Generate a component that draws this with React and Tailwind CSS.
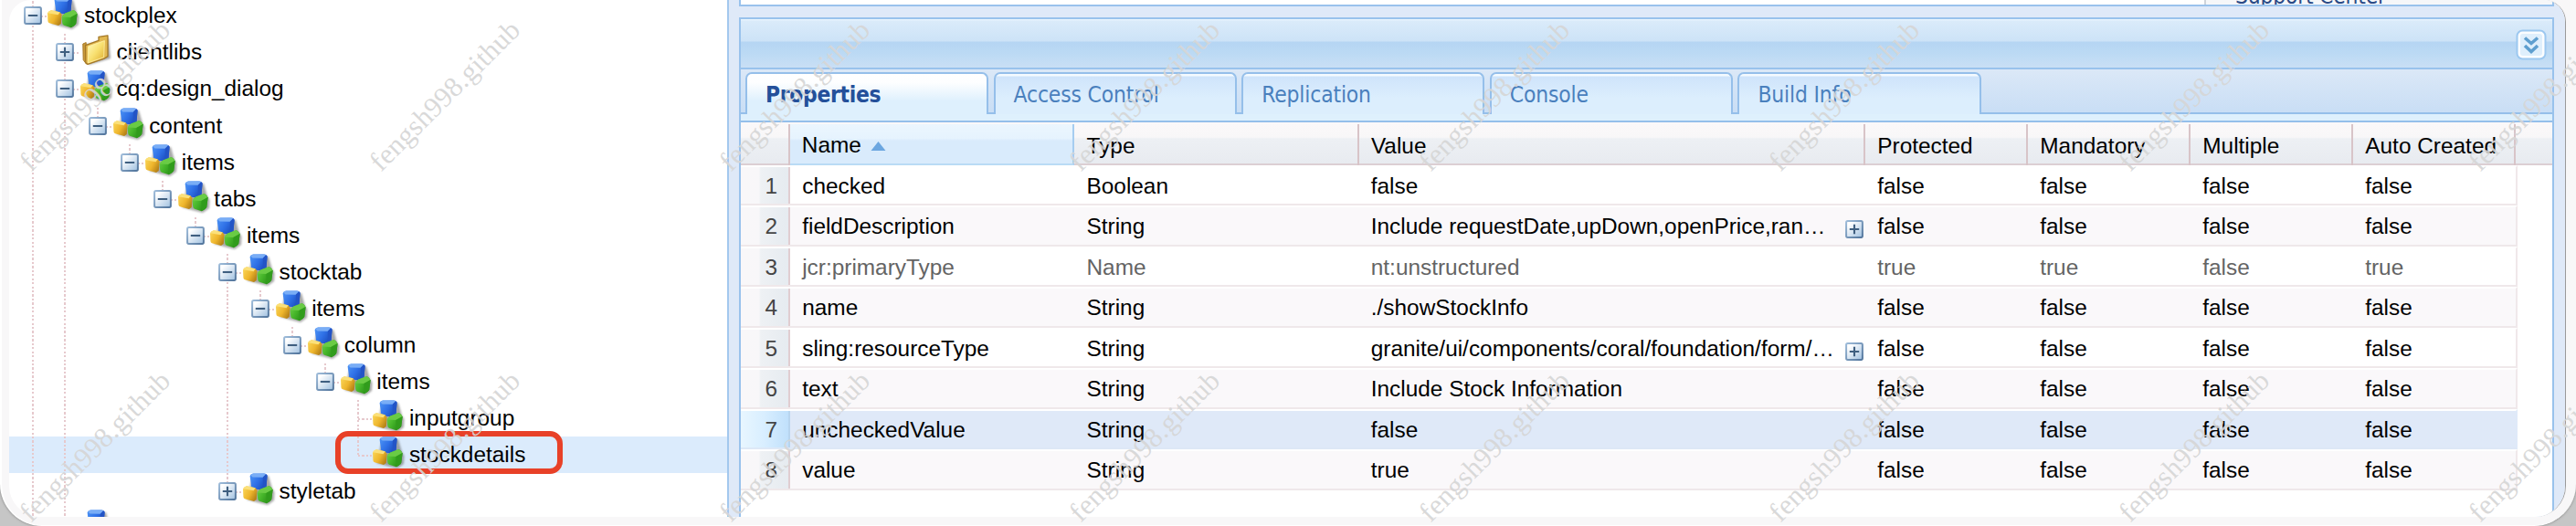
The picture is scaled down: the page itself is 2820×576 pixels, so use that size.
import React from "react";

const TREE = [
  { label: "stockplex", depth: 0, kind: "minus", lines: [] },
  { label: "clientlibs", depth: 1, kind: "plus", lines: [0], folder: true },
  { label: "cq:design_dialog", depth: 1, kind: "minus", lines: [0] },
  { label: "content", depth: 2, kind: "minus", end: true, lines: [0, 1] },
  { label: "items", depth: 3, kind: "minus", end: true, lines: [0, 1] },
  { label: "tabs", depth: 4, kind: "minus", end: true, lines: [0, 1] },
  { label: "items", depth: 5, kind: "minus", end: true, lines: [0, 1] },
  { label: "stocktab", depth: 6, kind: "minus", lines: [0, 1] },
  { label: "items", depth: 7, kind: "minus", end: true, lines: [0, 1, 6] },
  { label: "column", depth: 8, kind: "minus", end: true, lines: [0, 1, 6] },
  { label: "items", depth: 9, kind: "minus", end: true, lines: [0, 1, 6] },
  { label: "inputgroup", depth: 10, kind: "leaf", lines: [0, 1, 6] },
  { label: "stockdetails", depth: 10, kind: "leaf", end: true, lines: [0, 1, 6], selected: true },
  { label: "styletab", depth: 6, kind: "plus", end: true, lines: [0, 1] },
  { label: "", depth: 1, kind: "minus", lines: [0] },
];

const TABS = ["Properties", "Access Control", "Replication", "Console", "Build Info"];
const HEADERS = ["Type", "Value", "Protected", "Mandatory", "Multiple", "Auto Created"];

const ROWS = [
  ["checked", "Boolean", "false", "false", "false", "false", "false"],
  ["fieldDescription", "String", "Include requestDate,upDown,openPrice,ran…", "false", "false", "false", "false"],
  ["jcr:primaryType", "Name", "nt:unstructured", "true", "true", "false", "true"],
  ["name", "String", "./showStockInfo", "false", "false", "false", "false"],
  ["sling:resourceType", "String", "granite/ui/components/coral/foundation/form/…", "false", "false", "false", "false"],
  ["text", "String", "Include Stock Information", "false", "false", "false", "false"],
  ["uncheckedValue", "String", "false", "false", "false", "false", "false"],
  ["value", "String", "true", "false", "false", "false", "false"],
];

function Defs() {
  return (
    <svg width="0" height="0" className="absolute">
      <defs>
        <linearGradient id="tg" x1="0" y1="0" x2="1" y2="1">
          <stop offset="0.2" stopColor="#ffffff" />
          <stop offset="1" stopColor="#9fc0e0" />
        </linearGradient>
        <linearGradient id="tb" x1="0" y1="0" x2="1" y2="1">
          <stop offset="0" stopColor="#9dbbd9" />
          <stop offset="1" stopColor="#52759c" />
        </linearGradient>
        <linearGradient id="cb" x1="0" y1="0" x2="1" y2="0.6">
          <stop offset="0" stopColor="#4f96f6" />
          <stop offset="0.55" stopColor="#2f70e6" />
          <stop offset="1" stopColor="#1c4cbc" />
        </linearGradient>
        <linearGradient id="cy" x1="0" y1="0" x2="1" y2="0.6">
          <stop offset="0" stopColor="#fbd95c" />
          <stop offset="0.6" stopColor="#eeb52c" />
          <stop offset="1" stopColor="#b88418" />
        </linearGradient>
        <linearGradient id="cg" x1="0" y1="0" x2="1" y2="0.6">
          <stop offset="0" stopColor="#72d04c" />
          <stop offset="0.5" stopColor="#46b62a" />
          <stop offset="1" stopColor="#268a16" />
        </linearGradient>
        <linearGradient id="fo" x1="0" y1="0" x2="1" y2="1">
          <stop offset="0" stopColor="#fffbc0" />
          <stop offset="0.5" stopColor="#f8e070" />
          <stop offset="1" stopColor="#dcaa2c" />
        </linearGradient>
        <filter id="sh" x="-30%" y="-30%" width="160%" height="160%">
          <feGaussianBlur stdDeviation="1.3" />
        </filter>
      </defs>
    </svg>
  );
}

function Toggle({ plus }) {
  return (
    <svg width="20" height="20" viewBox="0 0 20 20" className="relative shrink-0">
      <rect x="1.1" y="1.1" width="17.8" height="17.8" rx="1.6" fill="url(#tg)" stroke="url(#tb)" strokeWidth="2" />
      <path d={plus ? "M4.8 10H15.2M10 4.8V15.2" : "M4.8 10H15.2"} stroke="#3f5f80" strokeWidth="2.1" />
    </svg>
  );
}

function Cubes() {
  return (
    <svg width="35.6" height="40" viewBox="0 0 35.6 40" className="block shrink-0 overflow-visible">
      <path d="M9 5 27 3 31 17 33.5 21 33 30 26 35 14 32 3 29Z" fill="#555" opacity="0.5" filter="url(#sh)" />
      <path d="M6.6 3.2Q7 1 10 .4H22Q25.2 .6 25.6 3L24.4 16Q23.8 17.6 20.8 18.6L10.6 17.4Q8.4 16.8 8.2 15Z" fill="url(#cb)" />
      <path d="M7.4 2.6Q8 1 10.4 .6H22Q23.6 .7 24 1.4L20.8 4.8 9.6 4.6Z" fill="#79adf6" />
      <path d="M20.8 4.8 24 1.4Q25.4 1.6 25.6 3L24.4 16Q23.8 17.6 20.8 18.6Z" fill="#2354c6" />
      <path d="M-1 17.6Q0 14.8 3 14.2L12.6 16.2 14.6 19 13.8 29 11 31 1 28.2Q-.4 27.8 -.6 26Z" fill="url(#cy)" />
      <path d="M-1 17.2Q.4 14.6 3 14.2L12.6 16.2 10.6 19.2Z" fill="#fbe07a" />
      <path d="M14.6 22Q16 18.6 18.4 17.4L27.6 14Q30.6 15.4 31.6 18.2L30.2 29Q28.6 31.8 24.8 33.2L17 30.8Q15.4 30 15.2 28Z" fill="url(#cg)" />
      <path d="M14.8 21.6Q16 18.6 18.4 17.4L27.6 14Q30.4 15.4 31.4 18L24.2 22Z" fill="#6acb45" />
      <path d="M24.4 22 31.6 18.2 30.2 29Q28.6 31.8 24.8 33.2Z" fill="#319c1c" />
    </svg>
  );
}

function Folder() {
  return (
    <svg width="35.6" height="40" viewBox="0 0 35.6 40" className="block shrink-0">
      <path d="M5 12 30 5 32 27 8 34Z" fill="#444" opacity="0.5" filter="url(#sh)" />
      <path d="M1.8 11 5.2 9.6 5.6 33.2 2.2 28.6Z" fill="#c89838" stroke="#a87a28" strokeWidth="1" />
      <path d="M4.6 12.6 19 7.4V3.4L29 1.8V24.6L25 27.2 7 33.4 4.8 31.4Z" fill="#e2b850" stroke="#a47826" strokeWidth="1.3" strokeLinejoin="round" />
      <path d="M7.6 13.8 25.4 7.6 24.6 25.8 7.4 31.8Z" fill="url(#fo)" stroke="#fff3a8" strokeWidth="0.8" />
    </svg>
  );
}

const V = "bg-[repeating-linear-gradient(to_bottom,#e6c9cd_0_2.2px,transparent_2.2px_4.44px)]";
const H = "bg-[repeating-linear-gradient(to_right,#e6c9cd_0_2.2px,transparent_2.2px_4.44px)]";

function Guide() {
  return (
    <span className="flex h-10 w-[35.6px] shrink-0 justify-center">
      <span className={`h-full w-[2px] ${V}`} />
    </span>
  );
}

function Elbow({ kind, end }) {
  return (
    <span className="relative flex h-10 w-[35.6px] shrink-0 items-center justify-center">
      <span className={`absolute left-[16.8px] top-0 w-[2px] ${end ? "h-[20px]" : "h-full"} ${V}`} />
      <span className={`absolute left-[17.8px] top-[20px] h-[2px] w-[15px] ${H}`} />
      {kind !== "leaf" && <Toggle plus={kind === "plus"} />}
    </span>
  );
}

function TreeRow({ node }) {
  const cells = [];
  for (let i = 0; i < node.depth; i++) {
    cells.push(node.lines.includes(i) ? <Guide key={i} /> : <span key={i} className="w-[35.6px] shrink-0" />);
  }
  return (
    <div className={`relative flex h-[40.04px] shrink-0 items-center pl-[7.8px] ${node.selected ? "bg-[#dbebfc]" : ""}`}>
      {cells}
      <Elbow kind={node.kind} end={node.end} />
      {node.folder ? <Folder /> : <Cubes />}
      <span className="pl-[3px] text-[24.4px] leading-10 whitespace-nowrap text-black">{node.label}</span>
      {node.selected && (
        <span className="absolute -top-[5.8px] left-[356.6px] h-[47.4px] w-[249.8px] rounded-[14px] border-[6.4px] border-[#e84128]" />
      )}
    </div>
  );
}

const COLS = "grid grid-cols-[54px_311.3px_311.3px_554.4px_178px_178px_178px_178px]";
const TAHOMA = "font-['DejaVu_Sans_Condensed','DejaVu_Sans',sans-serif] [font-stretch:condensed]";

function TabButton({ label, active }) {
  return (
    <div
      className={`flex w-[266.3px] shrink-0 rounded-t-[7px] border-2 border-b-0 border-[#95bfea] pl-[20px] pt-[8px] text-[24.4px] leading-[30px] whitespace-nowrap ${TAHOMA} ${
        active
          ? "h-[50px] bg-[linear-gradient(#ffffff_0,#fdfeff_20%,#def0fd_62%)] font-bold tracking-[-0.3px] text-[#24509a]"
          : "h-[46px] bg-[linear-gradient(#f4faff_0,#f4faff_2px,#cfe4fb_3px,#dceefd_60%)] tracking-[-0.15px] text-[#4a80bd]"
      }`}
    >
      {label}
    </div>
  );
}

function Tree() {
  return (
    <div className="flex h-[566px] w-[786px] shrink-0 flex-col overflow-hidden bg-white">
      <div className="-mt-[2.6px] flex flex-col">
        {TREE.map((n, i) => (
          <TreeRow key={i} node={n} />
        ))}
      </div>
    </div>
  );
}

function Grid() {
  const headBg = "bg-[linear-gradient(#fbf8f9_0,#f8f7f8_36%,#edf0f4_40%,#e8ebf0_100%)]";
  return (
    <div className="flex grow flex-col bg-white">
      <div className={`flex h-[47px] shrink-0 border-b-2 border-[#dccfd3] ${headBg}`}>
        <div className={`${COLS} h-[47px] text-[24.4px] leading-[49px] text-black`}>
          <div className="mt-[2px] h-[45px] border-r-2 border-[#d8c4c8]" />
          <div className="mt-[2px] flex h-[45px] items-center gap-[10px] border-b-2 border-r-2 border-[#a6cdf0] border-b-[#b9dbf5] bg-[linear-gradient(#ebf6fe_0,#e6f3fe_36%,#d9ebfc_42%)] pl-[12.8px]">
            <span className="pt-[2px]">Name</span>
            <svg width="17" height="10" viewBox="0 0 17 10" className="mt-[4px]">
              <path d="M8.5 0 16.5 10H0.5Z" fill="#6ba6e0" />
            </svg>
          </div>
          {HEADERS.map((h) => (
            <div key={h} className="mt-[2px] h-[45px] border-r-2 border-[#d8c4c8] pl-[13.3px] leading-[47px]">
              {h}
            </div>
          ))}
        </div>
      </div>
      {ROWS.map((r, i) => {
        const sel = i === 6;
        const tone = i === 2 ? "text-[#646464]" : "text-black";
        return (
          <div
            key={i}
            className={`${COLS} h-[44.44px] w-[1945px] shrink-0 border-b-2 border-r-2 border-t-2 border-t-white text-[24.4px] leading-[42px] ${
              sel ? "border-b-[#dde8f6] border-r-[#dfe9f8] bg-[#dfe9f8]" : i % 2 ? "border-b-[#efe8ea] border-r-[#f0e8ea] bg-[#faf8fa]" : "border-b-[#efe8ea] border-r-[#f0e8ea] bg-white"
            } ${tone}`}
          >
            <div
              className={`h-[40.44px] border-r-2 pr-[12px] text-right text-[#454545] ${
                sel
                  ? "border-[#b8d4ee] bg-[linear-gradient(to_right,#e8f6ff_0,#d8eeff_50%,#c0e0fb_100%)]"
                  : "border-[#e0cdd1] bg-[linear-gradient(to_right,#f9f7f9_0,#f8f7f9_38%,#eef1f4_42%,#e6ebf0_100%)]"
              }`}
            >
              {i + 1}
            </div>
            {r.map((c, j) => (
              <div key={j} className="flex h-[40.44px] items-start justify-between pl-[13.2px] pr-[2px] whitespace-nowrap">
                <span>{c}</span>
                {c.endsWith("…") && (
                  <span className="mt-[14px] flex">
                    <Toggle plus />
                  </span>
                )}
              </div>
            ))}
          </div>
        );
      })}
    </div>
  );
}

function Detail() {
  return (
    <div className="flex h-[566px] grow flex-col border-l-[2.4px] border-[#a3c8ee] bg-[#dfe9f8] pl-[11px] pr-[12px]">
      <div className="flex h-[7px] shrink-0 overflow-hidden border-2 border-t-0 border-[#99c2ec] bg-white">
        <div className="w-[1602px] shrink-0" />
        <div className="h-[5px] grow overflow-hidden border-l-2 border-[#cfd4da] bg-[#f6f7f9] pl-[32px]">
          <div className={`-mt-[16.5px] text-[24.4px] leading-[24px] tracking-[-0.2px] text-[#2a4a86] ${TAHOMA}`}>Support Center</div>
        </div>
      </div>
      <div className="mt-[12px] flex grow flex-col border-2 border-b-0 border-[#99c2ec]">
        <div className="flex h-[55px] shrink-0 items-start justify-end border-b-2 border-[#99c2ec] bg-[linear-gradient(#f0f8ff_0,#daebfa_2px,#cde3f7_24px,#b5d5f3_25px,#bcdaf4_38px,#c9dff5_100%)] pr-[6px] pt-[11px]">
          <svg width="34" height="34" viewBox="0 0 34 34">
            <rect x="1.5" y="1.5" width="31" height="31" rx="6" fill="#fbfdff" stroke="#9cc8f0" strokeWidth="2" />
            <rect x="5" y="5" width="24" height="24" rx="3" fill="#dfeffc" />
            <path d="M10 9.5 17 15.5 24 9.5M10 18 17 24.5 24 18" fill="none" stroke="#5f9fcf" strokeWidth="3.6" />
          </svg>
        </div>
        <div className="flex h-[49px] shrink-0 gap-[5.3px] border-b-2 border-[#95bfea] bg-[linear-gradient(#dbe8f7,#c9def5)] pl-[5px] pt-[3px]">
          {TABS.map((t, i) => (
            <TabButton key={t} label={t} active={i === 0} />
          ))}
        </div>
        <div className="h-[9px] shrink-0 border-b-2 border-[#95bfea] bg-[#def0fd]" />
        <Grid />
      </div>
    </div>
  );
}

function Watermarks() {
  return (
    <svg width="2820" height="576" className="pointer-events-none absolute left-0 top-0">
      {[189, 573].map((y) =>
        [0, 1, 2, 3, 4, 5, 6, 7].map((c) => (
          <text
            key={`${c}-${y}`}
            transform={`translate(${34 + c * 383} ${y}) rotate(-45)`}
            className="font-['Liberation_Serif',serif]"
            fontSize="31"
            textLength="218"
            fill="#d6d6d6"
            fillOpacity="0.92"
          >
            fengsh998.github
          </text>
        ))
      )}
    </svg>
  );
}

export default function App() {
  return (
    <div className="relative h-[576px] w-[2820px] overflow-hidden bg-[#c6c6c6] font-['Liberation_Sans',Arial,sans-serif]">
      <Defs />
      <div className="h-[576px] overflow-hidden rounded-b-[46px] border-b border-l-2 border-white bg-[#f8f7f8] shadow-[0_0_3px_#777]">
        <div className="ml-[8px] flex h-[566px] w-[2799px] overflow-hidden rounded-[24px] rounded-b-[34px] border-r border-[#9a9a9a]">
          <Tree />
          <Detail />
        </div>
      </div>
      <Watermarks />
    </div>
  );
}
